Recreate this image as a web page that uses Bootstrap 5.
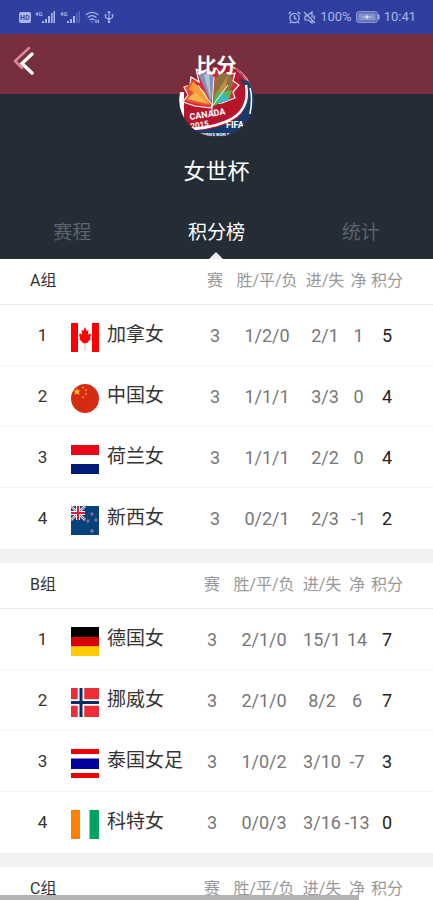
<!DOCTYPE html>
<html lang="zh-CN">
<head>
<meta charset="utf-8">
<meta name="viewport" content="width=device-width, initial-scale=1">
<title>比分 - 女世杯</title>
<link href="https://cdn.jsdelivr.net/npm/bootstrap@5.3.0/dist/css/bootstrap.min.css" rel="stylesheet">
<style>
body { font-family: Roboto, "Noto Sans CJK SC", sans-serif; color: #333; background: #fff; }
svg { display: block; flex: none; }
.status-bar { background: #303f9f; color: #abb5e8; height: 34px; font-size: 13px; padding: 0 17px 0 19px; }
.mute { margin-left: 2px; }
.app-bar { background: #782f3d; height: 60px; }
.app-bar h1 { font-size: 20px; line-height: 24px; font-weight: 700; z-index: 2; }
.back-btn { padding: 0 12px; height: 54px; }
.hero { background: #242d36; }
.crest { margin-top: -32px; z-index: 1; }
.hero h2 { font-size: 22px; line-height: 32px; font-weight: 400; margin: 19px 0 0; }
.tab-btn { color: #5c636b; background: none; border: 0; font-size: 19px; height: 55px; padding: 4px 0 0; }
.tab-btn.current { color: #fff; }
.tab-btn.current::after { content: ""; position: absolute; left: 50%; bottom: 0; margin-left: -7px; border: 7px solid transparent; border-top: 0; border-bottom-color: #f0eff1; }
.standings { table-layout: fixed; border-collapse: separate; border-spacing: 0; }
.standings th, .standings td { padding: 0; text-align: center; white-space: nowrap; font-weight: 400; }
.standings thead th { height: 46px; padding-bottom: 1px; font-size: 16px; color: #999; border-bottom: 1px solid #ececec; }
.standings thead th.group-name { color: #333; text-align: left; padding-left: 30px; }
.standings tbody td { height: 61px; font-size: 18px; color: #777; border-bottom: 1px solid #f5f5f5; }
.standings tbody tr:last-child td { border-bottom-color: #fbfbfb; }
.standings tbody td.rank { font-size: 17px; color: #333; padding: 2px 0 0 14px; }
.standings tbody td.team { color: #333; font-size: 19px; }
.standings .points { padding-right: 29px; }
.standings tbody td.points { color: #222; font-size: 18px; }
.flag { margin-top: 4px; }
.team-name { line-height: 28px; }
.c-rank { width: 71px; } .c-played { width: 32px; } .c-record { width: 72px; } .c-goals { width: 44px; }
.c-net { width: 23px; } .wide .c-net { width: 26px; } .c-points { width: 63px; }
.group-gap { height: 14px; background: #f2f2f2; flex: none; }
.progress-line { position: fixed; left: 0; bottom: 0; width: 83%; height: 5px; background: #b3b3b3; }
</style>
<script src="https://cdn.jsdelivr.net/npm/bootstrap@5.3.0/dist/js/bootstrap.bundle.min.js"></script>
</head>
<body>
<div class="vh-100 overflow-hidden d-flex flex-column">
  <div class="status-bar d-flex align-items-center justify-content-between flex-shrink-0">
    <div class="d-flex align-items-center gap-1">
      <svg width="12" height="11" viewBox="0 0 12 11"><rect width="12" height="11" rx="2" fill="#abb5e8"/><path d="M2 3v5M5 3v5M2 5.500h3M7 3.500h1.500q1.500 0 1.500 2t-1.500 2H7z" fill="none" stroke="#303f9f" stroke-width="1"/></svg>
      <svg width="21" height="14" viewBox="0 0 21 14" fill="#abb5e8"><text x="0" y="6" font-size="6" font-weight="700">4G</text><path d="M7 11h2v2H7zM10 9h2v4h-2zM13 6h2v7h-2zM16 3h1.600v10H16zM18.500 1H20v12h-1.500z"/></svg>
      <svg width="21" height="14" viewBox="0 0 21 14" fill="#abb5e8"><text x="0" y="6" font-size="6" font-weight="700">4G</text><path d="M7 11h2v2H7zM10 9h2v4h-2zM13 6h2v7h-2z"/><path d="M16 3h1.600v10H16zM18.500 1H20v12h-1.500z" opacity=".35"/></svg>
      <svg width="15" height="14" viewBox="0 0 15 14" fill="none" stroke="#abb5e8" stroke-width="1.300"><path d="M.8 4.800q6.200-5 12.600 0M2.800 7.400q4.300-3.400 8.600 0M4.700 9.900q2.400-1.900 4.800 0"/><circle cx="7.100" cy="12" r=".7" fill="#abb5e8" stroke="none"/><path d="M11 13V9.500M13.300 9.500V13"/></svg>
      <svg width="10" height="14" viewBox="0 0 10 14" fill="none" stroke="#abb5e8" stroke-width="1.100"><path d="M5 11V2M1.500 5v2.500L5 9.500l3.500-2V5"/><path d="M3.200 3L5 .5 6.800 3zM.6 4.200h1.800v1.500H.6zM7.600 4.200h1.800v1.500H7.600z" fill="#abb5e8" stroke="none"/><circle cx="5" cy="11.800" r="1.300" fill="#abb5e8" stroke="none"/></svg>
    </div>
    <div class="d-flex align-items-center">
      <svg width="13" height="13" viewBox="0 0 13 13" fill="none" stroke="#abb5e8" stroke-width="1.300"><circle cx="6.500" cy="7" r="4.600"/><path d="M6.500 4.200V7.300l2 1M.7 3L3.200.8M12.300 3L9.800.8M3 11l-1.200 1.300M10 11l1.200 1.300"/></svg>
      <svg class="mute" width="13" height="13" viewBox="0 0 13 13" fill="none" stroke="#abb5e8" stroke-width="1.200"><path d="M1 1l11 11M5 4l4-3v6M9 9.800V12L5.300 9H2V5h2M10.500 4.500q1.600 1.800.6 4"/></svg>
      <span class="me-1 ps-1">100%</span>
      <svg class="me-1" width="24" height="12" viewBox="0 0 24 12"><rect x=".6" y=".6" width="20.800" height="10.800" rx="2" fill="#5966b5" stroke="#929dd6"/><rect x="2.500" y="2.500" width="17" height="7" fill="#8590cf"/><path d="M5 6l5-.6 1-1.900 1 1.900 5 .6-5 .6-1 1.900-1-1.900z" fill="#e0e5ff"/><path d="M22.800 3.500v5" stroke="#abb5e8" stroke-width="1.500"/></svg>
      <span>10:41</span>
    </div>
  </div>

  <header class="app-bar position-relative d-flex flex-shrink-0 align-items-center justify-content-center">
    <button type="button" class="btn border-0 back-btn position-absolute start-0 top-0" aria-label="返回">
      <svg width="24" height="30" viewBox="0 0 24 30" fill="none" stroke-linecap="round"><path d="M17 2L3 15l7 7" stroke="#dc8798" stroke-width="2.500"/><path d="M20 8l-10 9.500L20 27" stroke="#fff" stroke-width="3.400"/></svg>
    </button>
    <h1 class="position-relative text-white m-0 pt-1">比分</h1>
  </header>

  <section class="hero flex-shrink-0 d-flex flex-column align-items-center">
    <svg class="crest position-relative" width="75" height="75" viewBox="0 0 75 75" role="img" aria-label="CANADA 2015">
      <clipPath id="round"><circle cx="37.500" cy="37.500" r="37.300"/></clipPath>
      <g clip-path="url(#round)">
        <rect width="75" height="75" fill="#b5162b"/>
        <path d="M0 0h75v8L52 4 36 5 22 11 5 30V10z" fill="#782f3d"/>
        <path d="M0 30h5v30H0z" fill="#fff"/>
        <path d="M50 5q14 4 19 20l6 4V15L58 3z" fill="#ee9dab"/>
        <path d="M53 10q3-6 8 0t7 9M57 7l6 10M65 10l-6 7" fill="none" stroke="#9d3a59" stroke-width="1"/>
        <path d="M60 17q8 8 7 23l-6 11 14 4V24q-4-6-15-7z" fill="#30395f"/>
        <path d="M71 24q3 28-25 39-17 6-38 6v8h67V28z" fill="#163a6b"/>
        <path d="M67 23q5 27-21 37-17 7-40 7" fill="none" stroke="#fff" stroke-width="2.500"/>
        <path d="M71 26q3 9 0 26" fill="none" stroke="#fff" stroke-width="1.500"/>
        <path d="M32 46L16 44l-12-4 5-7-4-8 6-2 1-8 8 5-3-13 7 4 4-4 5 4 4-5 4 5 8 2 7-2-2 8 6 4-6 7 2 6-13 5-9 1z" fill="#d62839" stroke="#fff" stroke-width="1.200"/>
        <path d="M32 41L18 9l7 3 4-4 6 7z" fill="#7e93b7"/>
        <path d="M32 39L25 13l5-3z" fill="#b8c1d3"/>
        <path d="M34 38l2-21 5-7 11 3 2 10-5 8z" fill="#8b713c"/>
        <path d="M35 35l14-22-3 15z" fill="#bd8e43"/>
        <path d="M33 45l4-14 16-3-3 10-9 3z" fill="#58b650"/>
        <path d="M38 41l5-11 8 8z" fill="#3bb9c9"/>
        <path d="M32 45L6 39l5-7-5-6 9-8z" fill="#eb5128"/>
        <path d="M31 43L10 27l4-7 12 10z" fill="#f79c38"/>
        <path d="M29 42L8 37l8-7z" fill="#f6b34d"/>
        <path d="M33 52V43L19 23M33 44l2-29M34 43l15-20" fill="none" stroke="#fff" stroke-width="1"/>
        <g fill="#fff" font-weight="700">
          <text x="11" y="58" font-size="9" transform="rotate(-9 11 58)">CANADA</text>
          <text x="12" y="67" font-size="8" transform="rotate(-9 12 67)">2015</text>
          <text x="47" y="66" font-size="9">FIFA</text>
          <text x="18" y="74" font-size="4">WOMEN'S WORLD</text>
        </g>
      </g>
    </svg>
    <h2 class="text-white">女世杯</h2>
    <nav class="d-flex w-100 mt-3" aria-label="栏目">
      <button type="button" class="tab-btn w-100">赛程</button>
      <button type="button" class="tab-btn w-100 current position-relative" aria-current="page">积分榜</button>
      <button type="button" class="tab-btn w-100">统计</button>
    </nav>
  </section>

  <main>
    <table class="standings w-100">
      <colgroup><col class="c-rank"><col><col class="c-played"><col class="c-record"><col class="c-goals"><col class="c-net"><col class="c-points"></colgroup>
      <thead><tr><th class="group-name" colspan="2">A组</th><th>赛</th><th>胜/平/负</th><th>进/失</th><th>净</th><th class="points">积分</th></tr></thead>
      <tbody>
        <tr><td class="rank">1</td><td class="team"><div class="d-flex align-items-center gap-2"><svg class="flag" width="28" height="29" viewBox="0 0 28 29"><path fill="#fff" d="M0 0h28v29H0z"/><path fill="#f00" d="M0 0h7v29H0zM21 0h7v29h-7zM14 4l1.700 4 1.800-1-.7 5 2.300-2 .5 2 .4 0-1 3 .7 1-3.700 4h-1.500l-.2 1h-.6l-.2-1H12l-3.700-4 .7-1-1-3h.4l.5-2 2.300 2-.7-5 1.800 1z"/><path d="M14 20v8" stroke="#f6a18b" stroke-width=".8"/></svg><span class="team-name">加拿女</span></div></td><td>3</td><td>1/2/0</td><td>2/1</td><td>1</td><td class="points">5</td></tr>
        <tr><td class="rank">2</td><td class="team"><div class="d-flex align-items-center gap-2"><svg class="flag" width="28" height="29" viewBox="0 0 28 29"><ellipse cx="14" cy="14.500" rx="14" ry="14.500" fill="#d52b12"/><path fill="#ffb51b" d="M6 4l1.100 2.400 2.600.2-2 1.700.8 2.600L6 9.500l-2.500 1.400.8-2.600-2-1.700 2.600-.2z"/><g fill="#f59a20"><circle cx="12" cy="3.500" r="1"/><circle cx="15" cy="6" r="1"/><circle cx="15" cy="10" r="1"/><circle cx="12" cy="13" r="1"/></g></svg><span class="team-name">中国女</span></div></td><td>3</td><td>1/1/1</td><td>3/3</td><td>0</td><td class="points">4</td></tr>
        <tr><td class="rank">3</td><td class="team"><div class="d-flex align-items-center gap-2"><svg class="flag" width="28" height="29" viewBox="0 0 28 29"><path fill="#fff" d="M0 0h28v29H0z"/><path fill="#e80817" d="M0 0h28v10H0z"/><path fill="#001b7a" d="M0 19h28v10H0z"/></svg><span class="team-name">荷兰女</span></div></td><td>3</td><td>1/1/1</td><td>2/2</td><td>0</td><td class="points">4</td></tr>
        <tr><td class="rank">4</td><td class="team"><div class="d-flex align-items-center gap-2"><svg class="flag" width="28" height="29" viewBox="0 0 28 29"><path fill="#06437b" d="M0 0h28v29H0z"/><path d="M0 0l14 14M14 0L0 14" stroke="#e3dce9" stroke-width="2.600"/><path d="M0 0l14 14M14 0L0 14" stroke="#cb4360" stroke-width=".8"/><path d="M7 0v14M0 7h14" stroke="#fff" stroke-width="4"/><path d="M7 0v14M0 7h14" stroke="#d3203d" stroke-width="2.200"/><g fill="#b84a78" stroke="#7c91b6" stroke-width=".5"><circle cx="21" cy="8" r="1.300"/><circle cx="17" cy="15" r="1.300"/><circle cx="25" cy="14" r="1.300"/><circle cx="21" cy="25" r="1.500"/></g></svg><span class="team-name">新西女</span></div></td><td>3</td><td>0/2/1</td><td>2/3</td><td>-1</td><td class="points">2</td></tr>
      </tbody>
    </table>
    <div class="group-gap"></div>
    <table class="standings wide w-100">
      <colgroup><col class="c-rank"><col><col class="c-played"><col class="c-record"><col class="c-goals"><col class="c-net"><col class="c-points"></colgroup>
      <thead><tr><th class="group-name" colspan="2">B组</th><th>赛</th><th>胜/平/负</th><th>进/失</th><th>净</th><th class="points">积分</th></tr></thead>
      <tbody>
        <tr><td class="rank">1</td><td class="team"><div class="d-flex align-items-center gap-2"><svg class="flag" width="28" height="29" viewBox="0 0 28 29"><path d="M0 0h28v10H0z"/><path fill="#d80000" d="M0 10h28v9.500H0z"/><path fill="#ffcb00" d="M0 19.500h28V29H0z"/></svg><span class="team-name">德国女</span></div></td><td>3</td><td>2/1/0</td><td>15/1</td><td>14</td><td class="points">7</td></tr>
        <tr><td class="rank">2</td><td class="team"><div class="d-flex align-items-center gap-2"><svg class="flag" width="28" height="29" viewBox="0 0 28 29"><path fill="#ed2e38" d="M0 0h28v29H0z"/><path d="M10 0v29M0 14.500h28" stroke="#fff" stroke-width="6.500"/><path d="M10 0v29M0 14.500h28" stroke="#092b66" stroke-width="3"/></svg><span class="team-name">挪威女</span></div></td><td>3</td><td>2/1/0</td><td>8/2</td><td>6</td><td class="points">7</td></tr>
        <tr><td class="rank">3</td><td class="team"><div class="d-flex align-items-center gap-2"><svg class="flag" width="28" height="29" viewBox="0 0 28 29"><path fill="#fff" d="M0 0h28v29H0z"/><path fill="#f00000" d="M0 0h28v5H0zM0 24h28v5H0z"/><path fill="#00009d" d="M0 9.500h28V20H0z"/></svg><span class="team-name">泰国女足</span></div></td><td>3</td><td>1/0/2</td><td>3/10</td><td>-7</td><td class="points">3</td></tr>
        <tr><td class="rank">4</td><td class="team"><div class="d-flex align-items-center gap-2"><svg class="flag" width="28" height="29" viewBox="0 0 28 29"><path fill="#fff" d="M0 0h28v29H0z"/><path fill="#ff8000" d="M0 0h9v29H0z"/><path fill="#00a35f" d="M18.500 0H28v29h-9.500z"/></svg><span class="team-name">科特女</span></div></td><td>3</td><td>0/0/3</td><td>3/16</td><td>-13</td><td class="points">0</td></tr>
      </tbody>
    </table>
    <div class="group-gap"></div>
    <table class="standings wide w-100">
      <colgroup><col class="c-rank"><col><col class="c-played"><col class="c-record"><col class="c-goals"><col class="c-net"><col class="c-points"></colgroup>
      <thead><tr><th class="group-name" colspan="2">C组</th><th>赛</th><th>胜/平/负</th><th>进/失</th><th>净</th><th class="points">积分</th></tr></thead>
    </table>
  </main>
</div>
<div class="progress-line"></div>
</body>
</html>
